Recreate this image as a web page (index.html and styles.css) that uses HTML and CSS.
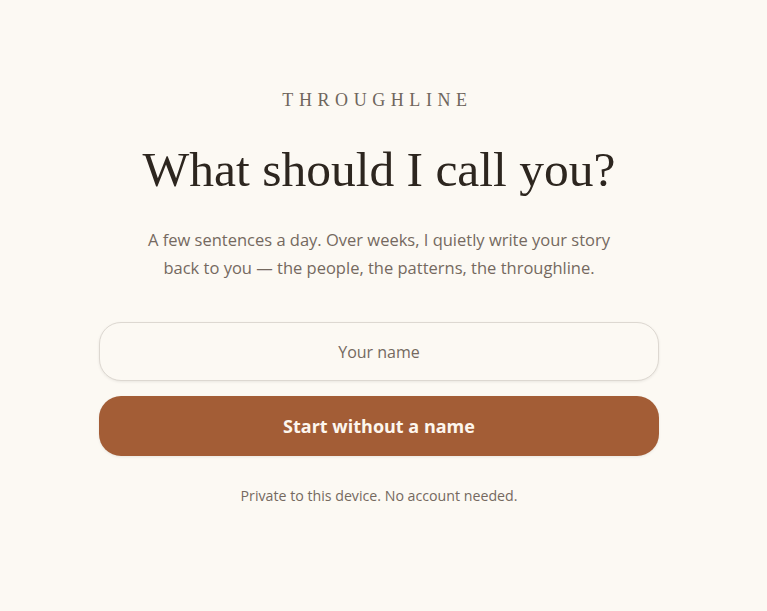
FILE: index.html
```html
<!DOCTYPE html>
<html lang="en">
<head>
<meta charset="utf-8">
<title>Throughline</title>
<link rel="stylesheet" href="styles.css">
</head>
<body>
<main class="page">
  <div class="card">
    <div class="brand">THROUGHLINE</div>
    <h1 class="title">What should I call you?</h1>
    <p class="lede">A few sentences a day. Over weeks, I quietly write your story back to you — the people, the patterns, the throughline.</p>
    <input class="name" type="text" placeholder="Your name">
    <button class="start" type="button">Start without a name</button>
    <p class="note">Private to this device. No account needed.</p>
  </div>
</main>
</body>
</html>
```
FILE: styles.css
```css
html, body {
  margin: 0;
  padding: 0;
  background: #fcf9f3;
}
.page {
  display: flex;
  justify-content: center;
  padding: 88px 9px 0 0;
}
.card {
  width: 560px;
  display: flex;
  flex-direction: column;
  align-items: center;
}
.brand {
  font-family: "Liberation Serif", serif;
  font-size: 18px;
  letter-spacing: 0.31em;
  color: #6f665d;
  margin: 0 3px 0 0;
  line-height: 24px;
}
.title {
  font-family: "Liberation Serif", serif;
  font-weight: 400;
  font-size: 49.5px;
  color: #2d261f;
  margin: 28px 0 0;
  line-height: 60px;
}
.lede {
  font-family: "Open Sans", sans-serif;
  font-size: 16.5px;
  line-height: 28px;
  color: #75695f;
  text-align: center;
  width: 490px;
  margin: 26px 0 0;
}
.name {
  box-sizing: border-box;
  width: 560px;
  height: 59px;
  margin-top: 40px;
  border: 1px solid #ddd8d1;
  border-radius: 22px;
  background: #fcf9f3;
  box-shadow: 0 1px 3px rgba(0,0,0,0.08);
  font-family: "Open Sans", sans-serif;
  font-size: 16px;
  text-align: center;
  color: #2d261f;
  outline: none;
}
.name::placeholder {
  color: #75695f;
}
.start {
  box-sizing: border-box;
  width: 560px;
  height: 60px;
  margin-top: 15px;
  border: none;
  border-radius: 22px;
  background: #a35d36;
  color: #fdf6ee;
  font-family: "Open Sans", sans-serif;
  font-weight: 700;
  font-size: 18px;
  box-shadow: 0 1px 3px rgba(0,0,0,0.08);
}
.note {
  font-family: "Open Sans", sans-serif;
  font-size: 14.2px;
  color: #75695f;
  margin: 30px 0 0;
  line-height: 20px;
}
```
